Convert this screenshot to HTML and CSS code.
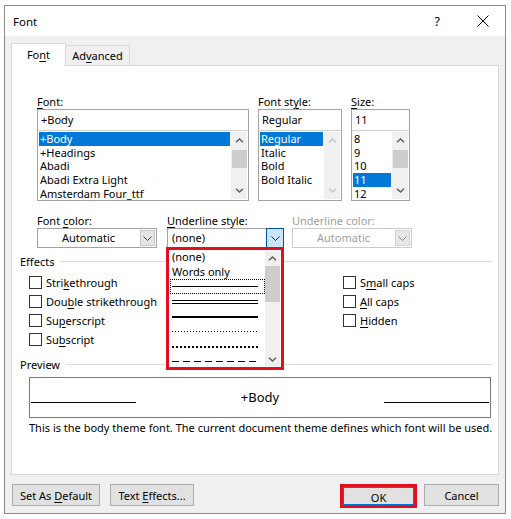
FILE: index.html
```html
<!DOCTYPE html>
<html>
<head>
<meta charset="utf-8">
<link rel="stylesheet" href="styles.css">
</head>
<body>
<div class="window">
  <div class="titlebar">
    <span class="title">Font</span>
    <span class="help">?</span>
    <svg class="close" width="12" height="12" viewBox="0 0 12 12"><path d="M0.5 0.5 L11.5 11.5 M11.5 0.5 L0.5 11.5" stroke="#000" stroke-width="1" fill="none"/></svg>
  </div>
  <div class="body">
    <div class="tabs">
      <div class="tab active">Fo<u>n</u>t</div>
      <div class="tab">Ad<u>v</u>anced</div>
    </div>
    <div class="panel">
      <div class="fonts">
        <div class="col col-font">
          <div class="lbl"><u>F</u>ont:</div>
          <div class="input">+Body</div>
          <div class="list">
            <div class="items">
              <div class="item sel">+Body</div>
              <div class="item">+Headings</div>
              <div class="item">Abadi</div>
              <div class="item">Abadi Extra Light</div>
              <div class="item">Amsterdam Four_ttf</div>
            </div>
            <div class="sbar">
              <svg class="arr" width="9" height="5" viewBox="0 0 9 5"><path d="M1 4.3 L4.5 1 L8 4.3" stroke="#606060" stroke-width="1.5" fill="none"/></svg>
              <div class="thumb t-font"></div>
              <svg class="arr down" width="9" height="5" viewBox="0 0 9 5"><path d="M1 0.7 L4.5 4 L8 0.7" stroke="#606060" stroke-width="1.5" fill="none"/></svg>
            </div>
          </div>
        </div>
        <div class="col col-style">
          <div class="lbl">Font st<u>y</u>le:</div>
          <div class="input">Regular</div>
          <div class="list">
            <div class="items">
              <div class="item sel">Regular</div>
              <div class="item">Italic</div>
              <div class="item">Bold</div>
              <div class="item">Bold Italic</div>
            </div>
            <div class="sbar">
              <svg class="arr" width="9" height="5" viewBox="0 0 9 5"><path d="M1 4.3 L4.5 1 L8 4.3" stroke="#c6c6c6" stroke-width="1.5" fill="none"/></svg>
              <div class="thumb t-none"></div>
              <svg class="arr down" width="9" height="5" viewBox="0 0 9 5"><path d="M1 0.7 L4.5 4 L8 0.7" stroke="#c6c6c6" stroke-width="1.5" fill="none"/></svg>
            </div>
          </div>
        </div>
        <div class="col col-size">
          <div class="lbl"><u>S</u>ize:</div>
          <div class="input">11</div>
          <div class="list">
            <div class="items">
              <div class="item">8</div>
              <div class="item">9</div>
              <div class="item">10</div>
              <div class="item sel">11</div>
              <div class="item">12</div>
            </div>
            <div class="sbar">
              <svg class="arr" width="9" height="5" viewBox="0 0 9 5"><path d="M1 4.3 L4.5 1 L8 4.3" stroke="#606060" stroke-width="1.5" fill="none"/></svg>
              <div class="thumb t-font"></div>
              <svg class="arr down" width="9" height="5" viewBox="0 0 9 5"><path d="M1 0.7 L4.5 4 L8 0.7" stroke="#606060" stroke-width="1.5" fill="none"/></svg>
            </div>
          </div>
        </div>
      </div>

      <div class="combos">
        <div class="ccol c-color">
          <div class="lbl">Font <u>c</u>olor:</div>
          <div class="combo">
            <span class="ctext center">Automatic</span>
            <span class="cbtn"><svg width="9" height="5" viewBox="0 0 9 5"><path d="M0.5 0.5 L4.5 4.5 L8.5 0.5" stroke="#444" stroke-width="1" fill="none"/></svg></span>
          </div>
        </div>
        <div class="ccol c-under">
          <div class="lbl"><u>U</u>nderline style:</div>
          <div class="combo">
            <span class="ctext">(none)</span>
            <span class="cbtn hot"><svg width="9" height="5" viewBox="0 0 9 5"><path d="M0.5 0.5 L4.5 4.5 L8.5 0.5" stroke="#222" stroke-width="1" fill="none"/></svg></span>
            <div class="ddlist">
              <div class="dditems">
                <div class="dd">(none)</div>
                <div class="dd">Words only</div>
                <div class="dd ln focus"><span class="l l-single"></span></div>
                <div class="dd ln"><span class="l l-double"></span></div>
                <div class="dd ln"><span class="l l-thick"></span></div>
                <div class="dd ln"><span class="l l-dot"></span></div>
                <div class="dd ln"><span class="l l-hdot"></span></div>
                <div class="dd ln"><span class="l l-dash"></span></div>
              </div>
              <div class="ddbar">
                <svg class="arr" width="9" height="5" viewBox="0 0 9 5"><path d="M1 4.3 L4.5 1 L8 4.3" stroke="#606060" stroke-width="1.5" fill="none"/></svg>
                <div class="thumb t-dd"></div>
                <svg class="arr down" width="9" height="5" viewBox="0 0 9 5"><path d="M1 0.7 L4.5 4 L8 0.7" stroke="#606060" stroke-width="1.5" fill="none"/></svg>
              </div>
            </div>
            <div class="ddmark"></div>
          </div>
        </div>
        <div class="ccol c-ucolor">
          <div class="lbl dis">Underline color:</div>
          <div class="combo disabled">
            <span class="ctext center">Automatic</span>
            <span class="cbtn"><svg width="9" height="5" viewBox="0 0 9 5"><path d="M0.5 0.5 L4.5 4.5 L8.5 0.5" stroke="#888" stroke-width="1" fill="none"/></svg></span>
          </div>
        </div>
      </div>

      <div class="group g-effects"><span>Effects</span><span class="rule"></span></div>

      <div class="effects">
        <div class="ecol left">
          <label class="chk"><span class="box"></span>Stri<u>k</u>ethrough</label>
          <label class="chk"><span class="box"></span>Dou<u>b</u>le strikethrough</label>
          <label class="chk"><span class="box"></span>Su<u>p</u>erscript</label>
          <label class="chk"><span class="box"></span>Su<u>b</u>script</label>
        </div>
        <div class="ecol">
          <label class="chk"><span class="box"></span>S<u>m</u>all caps</label>
          <label class="chk"><span class="box"></span><u>A</u>ll caps</label>
          <label class="chk"><span class="box"></span><u>H</u>idden</label>
        </div>
      </div>

      <div class="group g-preview"><span>Preview</span><span class="rule"></span></div>

      <div class="preview">
        <span class="pline"></span>
        <span class="ptext">+Body</span>
        <span class="pline"></span>
      </div>
      <p class="desc">This is the body theme font. The current document theme defines which font will be used.</p>
    </div>

    <div class="buttons">
      <button class="btn b-default">Set As <u>D</u>efault</button>
      <button class="btn b-effects">Text <u>E</u>ffects...</button>
      <span class="spacer"></span>
      <span class="okmark"><button class="btn b-ok">OK</button></span>
      <button class="btn b-cancel">Cancel</button>
    </div>
  </div>
</div>
</body>
</html>
```

FILE: styles.css
```css
* { box-sizing: border-box; }
html, body { margin: 0; padding: 0; background: #ffffff; }
body {
  font-family: "Noto Sans", "Open Sans", sans-serif;
  font-size: 11px;
  color: #000;
}
u { text-decoration: underline; text-underline-offset: 2px; }

.window {
  margin: 5px 0 0 4px;
  width: 502px;
  height: 509px;
  border: 1px solid #8a8a8a;
  background: #f0f0f0;
  display: flex;
  flex-direction: column;
}

.titlebar {
  height: 30px;
  background: #fff;
  display: flex;
  align-items: center;
  padding-left: 8px;
  flex: none;
}
.title { flex: 1; font-size: 11.5px; }
.help { font-size: 12.5px; margin-right: 37px; }
.close { margin-right: 16px; }

.body {
  flex: 1;
  padding: 7px 6px 0 6px;
  display: flex;
  flex-direction: column;
}

.tabs {
  display: flex;
  align-items: flex-end;
  height: 22px;
  flex: none;
}
.tab {
  height: 20px;
  width: 64px;
  border: 1px solid #d9d9d9;
  border-left: none;
  border-bottom: none;
  background: #f0f0f0;
  text-align: center;
  line-height: 19px;
}
.tab.active {
  width: 55px;
  height: 23px;
  margin-bottom: -1px;
  background: #fff;
  border-left: 1px solid #d9d9d9;
  position: relative;
  z-index: 1;
  line-height: 22px;
}

.panel {
  height: 410px;
  flex: none;
  background: #fff;
  border: 1px solid #d9d9d9;
  padding-left: 8px;
}

/* font pickers */
.fonts {
  display: flex;
  gap: 9px;
  margin: 28px 0 0 17px;
}
.col-font { width: 212px; }
.col-style { width: 84px; }
.col-size { width: 59px; }
.lbl { height: 15px; line-height: 15px; white-space: nowrap; }
.lbl.dis { color: #a0a0a0; }
.input {
  height: 22px;
  border: 1px solid #a3a3a3;
  padding-left: 3px;
  line-height: 19px;
}
.list {
  margin-top: -1px;
  height: 71px;
  border: 1px solid #a3a3a3;
  border-top-color: #d0d0d0;
  display: flex;
  overflow: hidden;
}
.items { flex: 1; padding: 1px 1px 0 1px; overflow: hidden; }
.item { height: 13.7px; line-height: 13.7px; padding-left: 1px; white-space: nowrap; }
.item.sel { background: #0078d7; color: #fff; }
.sbar {
  width: 16px;
  flex: none;
  background: #f0f0f0;
  display: flex;
  flex-direction: column;
  align-items: center;
  margin: 1px 1px 1px 0;
}
.arr { margin-top: 6px; flex: none; }
.arr.down { margin-top: auto; margin-bottom: 6px; }
.thumb { width: 15px; background: #cdcdcd; flex: none; }
.t-font { height: 18px; margin-top: 7px; }
.t-none { height: 0; }

/* combos */
.combos {
  display: flex;
  margin: 12px 0 0 17px;
}
.ccol { flex: none; }
.c-color { width: 120px; }
.c-under { width: 117px; margin-left: 10px; }
.c-ucolor { width: 120px; margin-left: 8px; }
.combo {
  position: relative;
  height: 20px;
  border: 1px solid #a3a3a3;
  display: flex;
  align-items: stretch;
  background: #fff;
}
.combo.disabled { border-color: #cccccc; color: #a0a0a0; }
.ctext { flex: 1; line-height: 18px; padding-left: 4px; white-space: nowrap; }
.ctext.center { text-align: center; padding-left: 0; }
.cbtn {
  width: 15px;
  margin: 1px;
  background: #e5e5e5;
  border: 1px solid #c6c6c6;
  display: flex;
  align-items: center;
  justify-content: center;
}
.combo.disabled .cbtn { background: #e8e8e8; border-color: #d3d3d3; }
.cbtn.hot {
  width: 18px;
  margin: -1px -1px -1px 0;
  background: #cce4f7;
  border: 1px solid #005499;
}

.ddlist {
  position: absolute;
  top: 19px;
  left: -1px;
  width: 117px;
  height: 122px;
  background: #fff;
  border: 1px solid #7a7a7a;
  display: flex;
  z-index: 5;
}
.dditems { flex: 1; padding-top: 0; }
.dd {
  height: 15px;
  line-height: 15px;
  padding-left: 4px;
  white-space: nowrap;
}
.dd.ln { display: flex; align-items: center; padding: 0 4px 0 4px; }
.dd.focus { outline: 1px dotted #000; outline-offset: -1px; margin-left: 2px; padding-left: 2px; }
.l { display: block; width: 86px; }
.l-single { border-top: 1px solid #000; }
.l-double { height: 4px; border-top: 1px solid #000; border-bottom: 1px solid #000; }
.l-thick { border-top: 2px solid #000; }
.l-dot { height: 1px; background: repeating-linear-gradient(90deg, #000 0 1px, transparent 1px 3px); }
.l-hdot { height: 2px; background: repeating-linear-gradient(90deg, #000 0 2px, transparent 2px 4px); }
.l-dash { height: 1px; background: repeating-linear-gradient(90deg, #000 0 7px, transparent 7px 11px); }
.ddbar {
  width: 15px;
  flex: none;
  margin: 2px 3px 3px 0;
  background: #f0f0f0;
  display: flex;
  flex-direction: column;
  align-items: center;
}
.ddbar .arr { margin-top: 5px; }
.ddbar .arr.down { margin-top: auto; margin-bottom: 4px; }
.t-dd { height: 36px; margin-top: 5px; }
.ddmark {
  position: absolute;
  top: 18px;
  left: -2px;
  width: 118px;
  height: 123px;
  border: 3px solid #e0101e;
  z-index: 6;
  pointer-events: none;
}

/* groups */
.group {
  display: flex;
  align-items: center;
  height: 15px;
  line-height: 15px;
  margin-right: 6px;
}
.group .rule { flex: 1; height: 1px; background: #dcdcdc; margin-left: 6px; }
.g-effects { margin-top: 6px; }
.g-preview { margin-top: 8px; }

.effects {
  display: flex;
  margin: 4px 0 0 9px;
}
.ecol { display: flex; flex-direction: column; }
.ecol.left { width: 314px; }
.chk {
  height: 19px;
  display: flex;
  align-items: center;
  white-space: nowrap;
}
.box {
  width: 13px;
  height: 13px;
  border: 1px solid #333;
  background: #fff;
  margin-right: 4px;
  flex: none;
}

.preview {
  margin: 5px 0 0 9px;
  width: 462px;
  height: 41px;
  border: 1px solid #7a7a7a;
  display: flex;
  align-items: flex-end;
  padding: 0 1px 14px 1px;
}
.pline { width: 105px; height: 1px; background: #000; flex: none; }
.ptext {
  flex: 1;
  text-align: center;
  font-size: 13px;
  line-height: 18px;
  margin-bottom: -3px;
}
.desc {
  margin: 2px 0 0 9px;
  line-height: 15px;
  white-space: nowrap;
}

.buttons {
  display: flex;
  align-items: flex-start;
  margin: 9px 0 0 1px;
  height: 24px;
}
.btn {
  font-family: inherit;
  font-size: 11px;
  color: #000;
  height: 22px;
  background: #e1e1e1;
  border: 1px solid #adadad;
  padding: 0;
  margin: 0;
  line-height: 19px;
}
.b-default { width: 88px; }
.b-effects { width: 84px; margin-left: 10px; }
.spacer { flex: 1; }
.okmark {
  display: flex;
  border: 3px solid #e0101e;
  width: 77px;
  height: 24px;
  margin-right: 7px;
}
.b-ok {
  flex: 1;
  height: 18px;
  border: 1px solid #0078d7;
}
.b-cancel { width: 75px; margin-right: 0; }
```
